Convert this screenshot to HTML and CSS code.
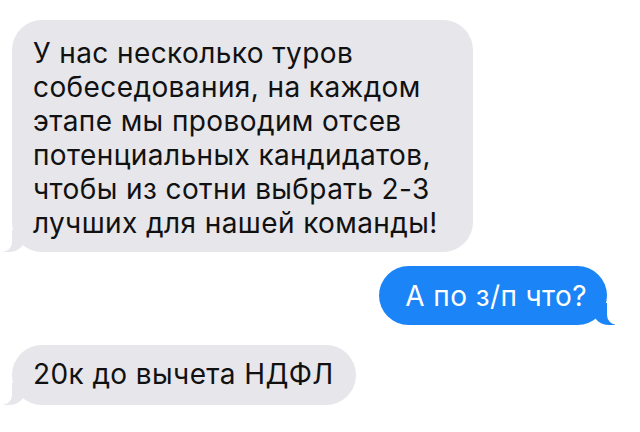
FILE: index.html
```html
<!DOCTYPE html>
<html lang="ru">
<head>
    <meta charset="UTF-8">
    <meta name="viewport" content="width=device-width, initial-scale=1.0">
    <title>Сообщения</title>
    <link rel="stylesheet" href="styles.css">
</head>
<body>
    <div class="chat">
        <div class="msg msg-in msg-long">
            У нас несколько туров собеседования, на каждом этапе мы проводим отсев потенциальных кандидатов, чтобы из сотни выбрать 2-3 лучших для нашей команды!
        </div>

        <div class="msg msg-out">А по з/п что?</div>

        <div class="msg msg-in msg-short">20к до вычета НДФЛ</div>
    </div>
</body>
</html>
```

FILE: styles.css
```css
body {
    margin: 0;
    padding: 0;
    background-color: #ffffff;
    font-family: 'Inter', 'Liberation Sans', sans-serif;
}

.chat {
    display: flex;
    flex-direction: column;
    align-items: flex-start;
    padding: 20px 33px 0 12px;
}

.msg {
    position: relative;
    font-size: 28px;
    letter-spacing: 0.4px;
    line-height: 34px;
    border-radius: 30px;
    box-sizing: border-box;
}

/* incoming, grey on the left */
.msg-in {
    background-color: #e6e6eb;
    color: #111111;
    padding: 16px 20px 12px 21px;
}

.msg-long {
    width: 461px;
}

.msg-short {
    margin-top: 20px;
    padding: 12px 22px 14px 21px;
}

/* outgoing, blue on the right */
.msg-out {
    align-self: flex-end;
    margin-top: 14px;
    background-color: #1b84f7;
    color: #ffffff;
    padding: 13px 20px 12px 26px;
}

/* tails */
.msg::before,
.msg::after {
    content: "";
    position: absolute;
    bottom: 0;
    height: 22px;
}

.msg-in::before {
    left: -9px;
    width: 22px;
    background-color: #e6e6eb;
    border-bottom-right-radius: 16px 14px;
}

.msg-in::after {
    left: -12px;
    width: 12px;
    background-color: #ffffff;
    border-bottom-right-radius: 10px;
}

.msg-out::before {
    right: -8px;
    width: 22px;
    background-color: #1b84f7;
    border-bottom-left-radius: 16px 14px;
}

.msg-out::after {
    right: -11px;
    width: 11px;
    background-color: #ffffff;
    border-bottom-left-radius: 10px;
}
```
